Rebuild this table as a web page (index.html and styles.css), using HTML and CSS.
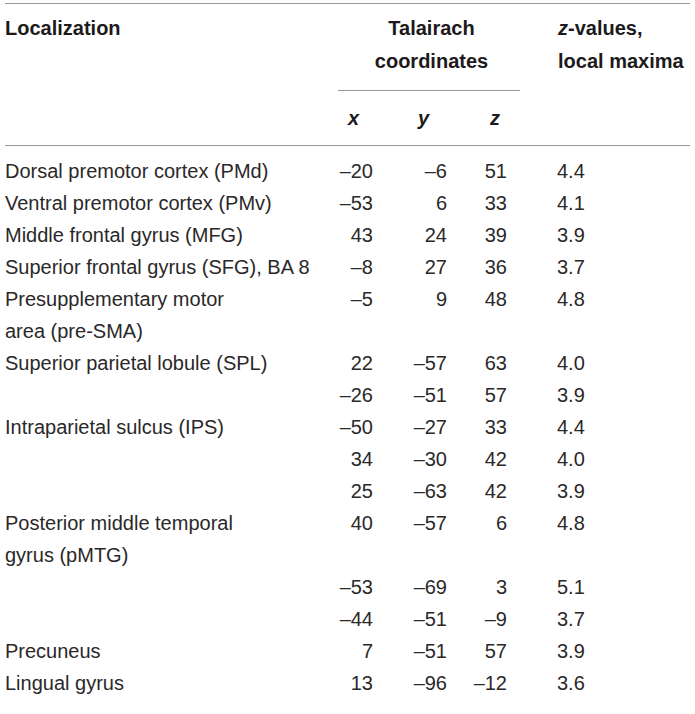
FILE: index.html
```html
<!DOCTYPE html>
<html>
<head>
<meta charset="utf-8">
<link rel="stylesheet" href="styles.css">
</head>
<body>
<div class="wrap">
<table class="tbl">
  <colgroup>
    <col class="c-loc"><col class="c-x"><col class="c-y"><col class="c-z"><col class="c-val">
  </colgroup>
  <thead>
    <tr class="h1">
      <th class="loc" rowspan="2">Localization</th>
      <th class="tal" colspan="3">Talairach<br>coordinates</th>
      <th class="zv" rowspan="2"><i>z</i>-values,<br>local maxima</th>
    </tr>
    <tr class="h2">
      <th class="hx"><i>x</i></th>
      <th class="hy"><i>y</i></th>
      <th class="hz"><i>z</i></th>
    </tr>
  </thead>
  <tbody>
    <tr class="first"><td>Dorsal premotor cortex (PMd)</td><td class="n">–20</td><td class="n">–6</td><td class="n nz">51</td><td class="v">4.4</td></tr>
    <tr><td>Ventral premotor cortex (PMv)</td><td class="n">–53</td><td class="n">6</td><td class="n nz">33</td><td class="v">4.1</td></tr>
    <tr><td>Middle frontal gyrus (MFG)</td><td class="n">43</td><td class="n">24</td><td class="n nz">39</td><td class="v">3.9</td></tr>
    <tr><td>Superior frontal gyrus (SFG), BA 8</td><td class="n">–8</td><td class="n">27</td><td class="n nz">36</td><td class="v">3.7</td></tr>
    <tr><td>Presupplementary motor<br>area (pre-SMA)</td><td class="n">–5</td><td class="n">9</td><td class="n nz">48</td><td class="v">4.8</td></tr>
    <tr><td>Superior parietal lobule (SPL)</td><td class="n">22</td><td class="n">–57</td><td class="n nz">63</td><td class="v">4.0</td></tr>
    <tr><td></td><td class="n">–26</td><td class="n">–51</td><td class="n nz">57</td><td class="v">3.9</td></tr>
    <tr><td>Intraparietal sulcus (IPS)</td><td class="n">–50</td><td class="n">–27</td><td class="n nz">33</td><td class="v">4.4</td></tr>
    <tr><td></td><td class="n">34</td><td class="n">–30</td><td class="n nz">42</td><td class="v">4.0</td></tr>
    <tr><td></td><td class="n">25</td><td class="n">–63</td><td class="n nz">42</td><td class="v">3.9</td></tr>
    <tr><td>Posterior middle temporal<br>gyrus (pMTG)</td><td class="n">40</td><td class="n">–57</td><td class="n nz">6</td><td class="v">4.8</td></tr>
    <tr><td></td><td class="n">–53</td><td class="n">–69</td><td class="n nz">3</td><td class="v">5.1</td></tr>
    <tr><td></td><td class="n">–44</td><td class="n">–51</td><td class="n nz">–9</td><td class="v">3.7</td></tr>
    <tr><td>Precuneus</td><td class="n">7</td><td class="n">–51</td><td class="n nz">57</td><td class="v">3.9</td></tr>
    <tr><td>Lingual gyrus</td><td class="n">13</td><td class="n">–96</td><td class="n nz">–12</td><td class="v">3.6</td></tr>
  </tbody>
</table>
</div>
</body>
</html>
```
FILE: styles.css
```css
html, body {
  margin: 0;
  padding: 0;
  background: #ffffff;
}
body {
  font-family: "Liberation Sans", Arial, Helvetica, sans-serif;
  color: #2b2829;
}
.wrap {
  padding: 3px 5px 0 5px;
}
.tbl {
  border-collapse: collapse;
  table-layout: fixed;
  width: 685px;
}
.c-loc { width: 333px; }
.c-x { width: 45px; }
.c-y { width: 74px; }
.c-z { width: 63px; }
.c-val { width: 170px; }

.tbl th, .tbl td {
  padding: 0;
  vertical-align: top;
  white-space: nowrap;
}
.tbl thead th {
  font-size: 20px;
  font-weight: bold;
  color: #1c1a1b;
  text-align: left;
}
.tbl thead tr.h1 th {
  border-top: 1px solid #9a9a9a;
  padding-top: 8px;
  line-height: 33px;
}
.tbl thead th.tal {
  text-align: center;
  padding-bottom: 12px;
  padding-left: 5px;
  border-bottom: 1px solid #9a9a9a;
}
.tbl thead th.zv {
  padding-left: 38px;
  border-bottom: 1px solid #9a9a9a;
}
.tbl thead th.loc {
  border-bottom: 1px solid #9a9a9a;
}
.tbl thead tr.h2 th {
  padding-top: 12px;
  padding-bottom: 11px;
  line-height: 31px;
  border-bottom: 1px solid #9a9a9a;
}
.tbl thead th.hx { padding-left: 10px; }
.tbl thead th.hy { padding-left: 35px; }
.tbl thead th.hz { padding-left: 33px; }

.tbl tbody td {
  font-size: 20px;
  line-height: 32px;
}
.tbl tbody tr.first td {
  padding-top: 9px;
}
.tbl td.n {
  text-align: right;
  padding-right: 10px;
}
.tbl td.n.nz {
  padding-right: 13px;
}
.tbl td.v {
  padding-left: 37px;
}
```
